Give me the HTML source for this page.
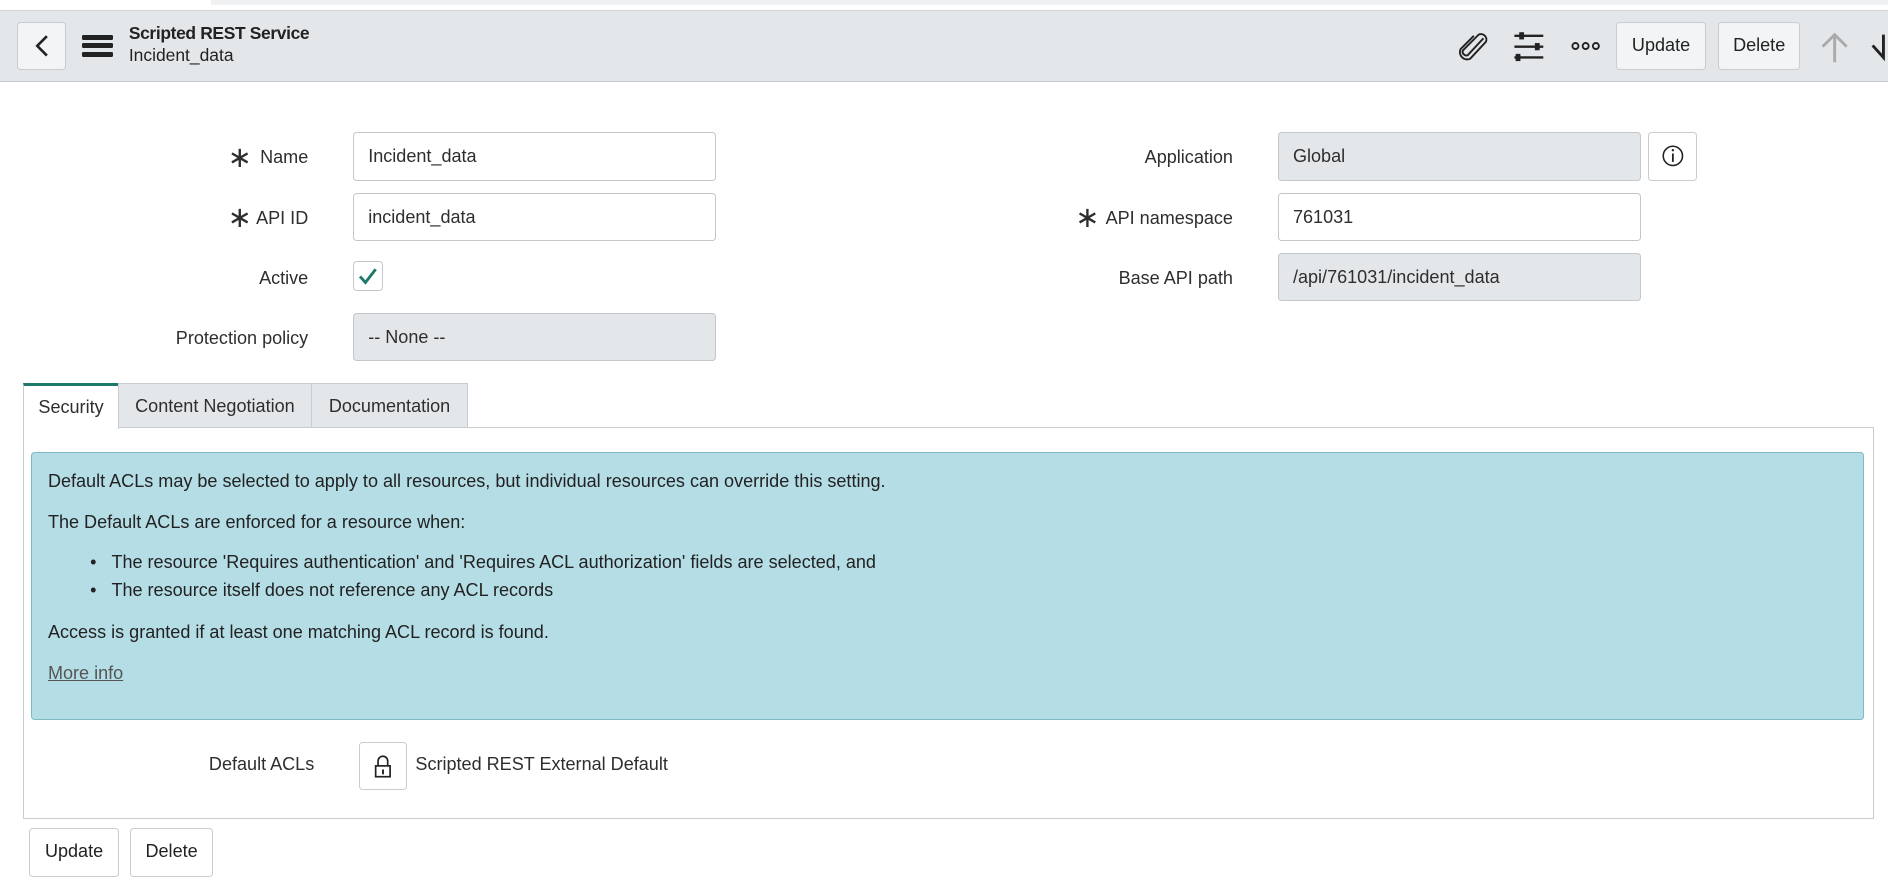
<!DOCTYPE html>
<html><head><meta charset="utf-8"><style>
html,body{margin:0;padding:0;background:#fff;width:1888px;height:882px;overflow:hidden}
#w{zoom:1.20408;position:relative;width:1568px;height:732px;font-family:"Liberation Sans",sans-serif;color:#2e2e2e;font-size:15px}
.a{position:absolute}
.btn{position:absolute;border:1px solid #c9cdd1;border-radius:3px;background:#fff;box-sizing:border-box;text-align:center;font-size:15px;line-height:38px;color:#222}
.hb{background:#f3f4f5}
.inp{position:absolute;border:1px solid #c3c7cb;border-radius:3px;box-sizing:border-box;height:40px;width:302px;line-height:39px;padding-left:12px;font-size:15px;background:#fff}
.ro{background:#e4e7ea}
.lbl{position:absolute;text-align:right;font-size:15px;line-height:22px}
.ast{position:absolute;font-size:24px;line-height:20px}
.tab{position:absolute;top:318px;height:37px;box-sizing:border-box;line-height:38px;font-size:15px;text-align:center;background:#e4e7ea;border:1px solid #c9cdd1;border-bottom:none}
.info p{margin:0;position:absolute;left:13px;white-space:nowrap}
</style></head><body><div id="w">
<div class="a" style="left:175px;top:0;width:1565px;height:4px;background:#f0f1f2"></div>
<div class="a" style="left:0;top:8px;width:1568px;height:60px;background:#e4e7ea;border-top:1px solid #d4d7da;border-bottom:1px solid #c9ccd0;box-sizing:border-box"></div>
<div class="btn hb" style="left:14px;top:18px;width:41px;height:40px"><svg width="41" height="38" viewBox="0 0 41 38"><path d="M24 11 L16 19 L24 27" fill="none" stroke="#222" stroke-width="2.2"/></svg></div>
<div class="a" style="left:68px;top:29px;width:26px;height:4px;background:#222;border-radius:1px"></div>
<div class="a" style="left:68px;top:36px;width:26px;height:4px;background:#222;border-radius:1px"></div>
<div class="a" style="left:68px;top:43px;width:26px;height:4px;background:#222;border-radius:1px"></div>
<div class="a" style="left:107px;top:19px;font-size:14.5px;font-weight:bold;color:#222;letter-spacing:-0.3px">Scripted REST Service</div>
<div class="a" style="left:107px;top:37px;font-size:14.5px;color:#222">Incident_data</div>
<svg class="a" style="left:1210px;top:26px" width="30" height="28" viewBox="0 0 30 28"><path d="M22 6 L9 20 a3 3 0 0 1 -4 -4 L18 3 a4.5 4.5 0 0 1 6 6 L11 23 a6 6 0 0 1 -8 -8 L14 4" fill="none" stroke="#222" stroke-width="1.6"/></svg>
<svg class="a" style="left:1256px;top:26px" width="30" height="28" viewBox="0 0 30 28"><g stroke="#222" stroke-width="2"><line x1="2" y1="4" x2="26" y2="4"/><line x1="2" y1="13" x2="26" y2="13"/><line x1="2" y1="22" x2="26" y2="22"/></g><rect x="6" y="1" width="4" height="6" fill="#222"/><rect x="19" y="10" width="4" height="6" fill="#222"/><rect x="3" y="19" width="4" height="6" fill="#222"/></svg>
<svg class="a" style="left:1304px;top:33px" width="26" height="10" viewBox="0 0 26 10"><g fill="none" stroke="#222" stroke-width="1.6"><circle cx="4.5" cy="5" r="2.5"/><circle cx="13" cy="5" r="2.5"/><circle cx="21.5" cy="5" r="2.5"/></g></svg>
<div class="btn hb" style="left:1342px;top:18px;width:75px;height:40px">Update</div>
<div class="btn hb" style="left:1427px;top:18px;width:68px;height:40px">Delete</div>
<svg class="a" style="left:1511px;top:26px" width="26" height="28" viewBox="0 0 26 28"><path d="M13 26 V3 M3 13 L13 3 L23 13" fill="none" stroke="#aaa" stroke-width="2.4"/></svg>
<svg class="a" style="left:1552px;top:26px" width="16" height="28" viewBox="0 0 16 28"><path d="M3 12 L12 22 V3" fill="none" stroke="#222" stroke-width="2.4"/></svg>

<div class="ast" style="left:189px;top:121px">∗</div>
<div class="lbl" style="left:100px;width:156px;top:120px">Name</div>
<div class="inp" style="left:293px;top:110px">Incident_data</div>
<div class="ast" style="left:189px;top:171px">∗</div>
<div class="lbl" style="left:100px;width:156px;top:170px">API ID</div>
<div class="inp" style="left:293px;top:160px">incident_data</div>
<div class="lbl" style="left:100px;width:156px;top:220px">Active</div>
<div class="a" style="left:293px;top:217px;width:25px;height:25px;border:1px solid #c3c7cb;border-radius:3px;box-sizing:border-box"><svg width="23" height="23" viewBox="0 0 23 23"><path d="M5 12 L9.5 17 L18 6" fill="none" stroke="#1d7a6b" stroke-width="2.4"/></svg></div>
<div class="lbl" style="left:60px;width:196px;top:270px">Protection policy</div>
<div class="inp ro" style="left:293px;top:260px">-- None --</div>

<div class="lbl" style="left:860px;width:164px;top:120px">Application</div>
<div class="inp ro" style="left:1061px;top:110px">Global</div>
<div class="btn" style="left:1369px;top:110px;width:40px;height:40px"><svg width="38" height="38" viewBox="0 0 38 38"><circle cx="19" cy="19" r="8" fill="none" stroke="#222" stroke-width="1.3"/><line x1="19" y1="17" x2="19" y2="24" stroke="#222" stroke-width="1.5"/><circle cx="19" cy="14.3" r="1" fill="#222"/></svg></div>
<div class="ast" style="left:893px;top:171px">∗</div>
<div class="lbl" style="left:860px;width:164px;top:170px">API namespace</div>
<div class="inp" style="left:1061px;top:160px">761031</div>
<div class="lbl" style="left:860px;width:164px;top:220px">Base API path</div>
<div class="inp ro" style="left:1061px;top:210px">/api/761031/incident_data</div>

<div class="a" style="left:19px;top:355px;width:1537px;height:325px;border:1px solid #c9cdd1;box-sizing:border-box"></div>
<div class="tab" style="left:19px;width:80px;background:#fff;border-top:3px solid #1d7a6b;height:38px;line-height:36px">Security</div>
<div class="tab" style="left:98px;width:161px">Content Negotiation</div>
<div class="tab" style="left:258px;width:131px">Documentation</div>

<div class="a info" style="left:26px;top:375px;width:1522px;height:223px;background:#b5dde5;border:1px solid #80bac4;border-radius:3px;box-sizing:border-box;font-size:15px;color:#222">
<p style="top:15px">Default ACLs may be selected to apply to all resources, but individual resources can override this setting.</p>
<p style="top:49px">The Default ACLs are enforced for a resource when:</p>
<p style="top:83px;left:48px">•&nbsp;&nbsp;&nbsp;The resource 'Requires authentication' and 'Requires ACL authorization' fields are selected, and</p>
<p style="top:106px;left:48px">•&nbsp;&nbsp;&nbsp;The resource itself does not reference any ACL records</p>
<p style="top:141px">Access is granted if at least one matching ACL record is found.</p>
<p style="top:175px;color:#555;text-decoration:underline">More info</p>
</div>

<div class="lbl" style="left:100px;width:161px;top:624px">Default ACLs</div>
<div class="btn" style="left:298px;top:616px;width:40px;height:40px"><svg width="38" height="38" viewBox="0 0 38 38"><rect x="13" y="19" width="12" height="9" fill="none" stroke="#222" stroke-width="1.4"/><path d="M15 19 V15 a4 4 0 0 1 8 0 V19" fill="none" stroke="#222" stroke-width="1.4"/><rect x="18.3" y="22" width="1.6" height="4" fill="#222"/></svg></div>
<div class="a" style="left:345px;top:624px;font-size:15px;line-height:22px">Scripted REST External Default</div>

<div class="btn" style="left:24px;top:688px;width:75px;height:40px">Update</div>
<div class="btn" style="left:108px;top:688px;width:69px;height:40px">Delete</div>
</div></body></html>
